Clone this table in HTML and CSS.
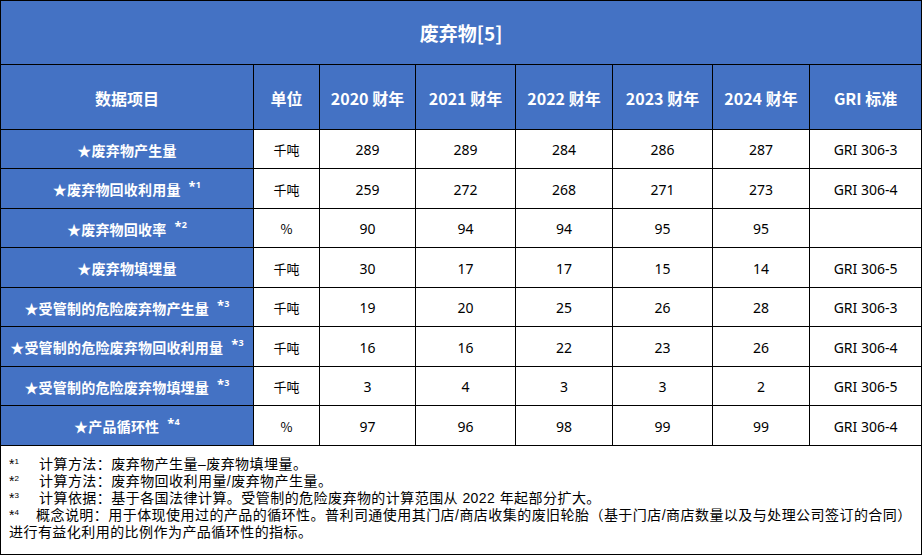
FILE: index.html
```html
<!DOCTYPE html>
<html lang="zh-CN">
<head>
<meta charset="utf-8">
<title>废弃物[5]</title>
<link rel="stylesheet" href="styles.css">
</head>
<body>
<table class="waste">
  <colgroup>
    <col class="c-item"><col class="c-unit"><col class="c-y1"><col class="c-y2"><col class="c-y3"><col class="c-y4"><col class="c-y5"><col class="c-gri">
  </colgroup>
  <tr class="r-title"><th colspan="8" class="title">废弃物[5]</th></tr>
  <tr class="r-head">
    <th>数据项目</th><th>单位</th><th>2020 财年</th><th>2021 财年</th><th>2022 财年</th><th>2023 财年</th><th>2024 财年</th><th>GRI 标准</th>
  </tr>
  <tr class="r-a">
    <th class="label">★废弃物产生量</th><td class="unit">千吨</td><td>289</td><td>289</td><td>284</td><td>286</td><td>287</td><td>GRI 306-3</td>
  </tr>
  <tr class="r-b">
    <th class="label">★废弃物回收利用量<span class="mark">*<sup>1</sup></span></th><td class="unit">千吨</td><td>259</td><td>272</td><td>268</td><td>271</td><td>273</td><td>GRI 306-4</td>
  </tr>
  <tr class="r-a">
    <th class="label">★废弃物回收率<span class="mark">*<sup>2</sup></span></th><td class="unit">%</td><td>90</td><td>94</td><td>94</td><td>95</td><td>95</td><td></td>
  </tr>
  <tr class="r-b">
    <th class="label">★废弃物填埋量</th><td class="unit">千吨</td><td>30</td><td>17</td><td>17</td><td>15</td><td>14</td><td>GRI 306-5</td>
  </tr>
  <tr class="r-a">
    <th class="label">★受管制的危险废弃物产生量<span class="mark">*<sup>3</sup></span></th><td class="unit">千吨</td><td>19</td><td>20</td><td>25</td><td>26</td><td>28</td><td>GRI 306-3</td>
  </tr>
  <tr class="r-b">
    <th class="label">★受管制的危险废弃物回收利用量<span class="mark">*<sup>3</sup></span></th><td class="unit">千吨</td><td>16</td><td>16</td><td>22</td><td>23</td><td>26</td><td>GRI 306-4</td>
  </tr>
  <tr class="r-a">
    <th class="label">★受管制的危险废弃物填埋量<span class="mark">*<sup>3</sup></span></th><td class="unit">千吨</td><td>3</td><td>4</td><td>3</td><td>3</td><td>2</td><td>GRI 306-5</td>
  </tr>
  <tr class="r-b">
    <th class="label">★产品循环性<span class="mark">*<sup>4</sup></span></th><td class="unit">%</td><td>97</td><td>96</td><td>98</td><td>99</td><td>99</td><td>GRI 306-4</td>
  </tr>
  <tr class="r-notes">
    <td colspan="8" class="notes">
      <div class="note"><span class="nm">*<sup>1</sup></span>计算方法：废弃物产生量–废弃物填埋量。</div>
      <div class="note"><span class="nm">*<sup>2</sup></span>计算方法：废弃物回收利用量/废弃物产生量。</div>
      <div class="note"><span class="nm">*<sup>3</sup></span>计算依据：基于各国法律计算。受管制的危险废弃物的计算范围从 2022 年起部分扩大。</div>
      <div class="note"><span class="nm nm4">*<sup>4</sup></span>概念说明：用于体现使用过的产品的循环性。普利司通使用其门店/商店收集的废旧轮胎（基于门店/商店数量以及与处理公司签订的合同）</div>
      <div class="note">进行有益化利用的比例作为产品循环性的指标。</div>
    </td>
  </tr>
</table>
</body>
</html>
```

FILE: styles.css
```css
html, body {
  margin: 0;
  padding: 0;
  background: #ffffff;
}

.waste {
  border-collapse: collapse;
  table-layout: fixed;
  width: 921px;
  font-family: "Noto Sans", "Noto Sans CJK SC", sans-serif;
  color: #000;
}

.c-item { width: 253px; }
.c-unit { width: 66px; }
.c-y1 { width: 96px; }
.c-y2 { width: 100px; }
.c-y3 { width: 97px; }
.c-y4 { width: 100px; }
.c-y5 { width: 97px; }
.c-gri { width: 112px; }

.waste th,
.waste td {
  border: 1px solid #000;
  padding: 0;
  text-align: center;
  vertical-align: middle;
  white-space: nowrap;
}

.waste th {
  background: #4472c4;
  color: #ffffff;
  font-family: "Noto Sans CJK SC", sans-serif;
  font-weight: 700;
}

.r-title { height: 64px; }
.title {
  font-size: 19px;
  padding-top: 4px;
}

.r-head { height: 65px; }
.r-head th {
  font-size: 16px;
  padding-top: 2px;
}

.r-a { height: 39px; }
.r-b { height: 40px; }

.waste td {
  font-size: 14px;
  padding-top: 1px;
}

.waste td.unit {
  font-family: "Noto Sans CJK SC", sans-serif;
  font-size: 13px;
}

.waste th.label {
  font-size: 14px;
  letter-spacing: 0.2px;
  padding-top: 1px;
}

.mark {
  margin-left: 8px;
  font-size: 13px;
  font-family: "Noto Sans", sans-serif;
  position: relative;
  top: -4px;
}

.mark sup {
  font-size: 9px;
  line-height: 0;
  vertical-align: 3px;
}

.r-notes { height: 109px; }

.waste td.notes {
  text-align: left;
  vertical-align: top;
  white-space: normal;
  font-family: "Liberation Sans", "Noto Sans CJK SC", sans-serif;
  font-size: 14px;
  line-height: 17px;
  letter-spacing: 0.45px;
  padding: 10px 0 12px 8px;
  color: #000;
}

.note {
  white-space: nowrap;
  height: 17px;
  line-height: 17px;
}

.nm {
  display: inline-block;
  width: 30px;
  line-height: 17px;
  font-family: "Liberation Sans", sans-serif;
  letter-spacing: 0;
}

.nm4 {
  width: 27px;
}

.nm sup {
  font-size: 8px;
  line-height: 0;
  vertical-align: 5px;
}
```
